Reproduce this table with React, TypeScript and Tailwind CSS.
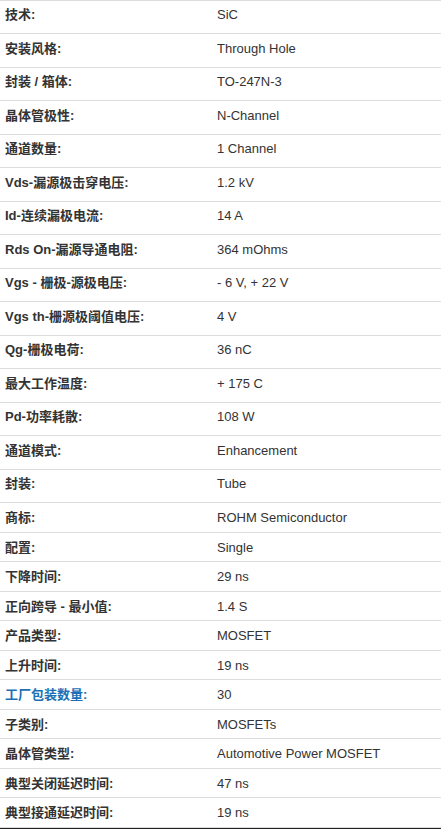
import React from 'react';

interface SpecRow {
  label: string;
  value: string;
  link?: boolean;
}

const ROWS: SpecRow[] = [
  { label: '技术:', value: 'SiC' },
  { label: '安装风格:', value: 'Through Hole' },
  { label: '封装 / 箱体:', value: 'TO-247N-3' },
  { label: '晶体管极性:', value: 'N-Channel' },
  { label: '通道数量:', value: '1 Channel' },
  { label: 'Vds-漏源极击穿电压:', value: '1.2 kV' },
  { label: 'Id-连续漏极电流:', value: '14 A' },
  { label: 'Rds On-漏源导通电阻:', value: '364 mOhms' },
  { label: 'Vgs - 栅极-源极电压:', value: '- 6 V, + 22 V' },
  { label: 'Vgs th-栅源极阈值电压:', value: '4 V' },
  { label: 'Qg-栅极电荷:', value: '36 nC' },
  { label: '最大工作温度:', value: '+ 175 C' },
  { label: 'Pd-功率耗散:', value: '108 W' },
  { label: '通道模式:', value: 'Enhancement' },
  { label: '封装:', value: 'Tube' },
  { label: '商标:', value: 'ROHM Semiconductor' },
  { label: '配置:', value: 'Single' },
  { label: '下降时间:', value: '29 ns' },
  { label: '正向跨导 - 最小值:', value: '1.4 S' },
  { label: '产品类型:', value: 'MOSFET' },
  { label: '上升时间:', value: '19 ns' },
  { label: '工厂包装数量:', value: '30', link: true },
  { label: '子类别:', value: 'MOSFETs' },
  { label: '晶体管类型:', value: 'Automotive Power MOSFET' },
  { label: '典型关闭延迟时间:', value: '47 ns' },
  { label: '典型接通延迟时间:', value: '19 ns' },
];

// first block of rows is taller (text sits a bit high), tail rows are tighter
const rowHeight = (idx: number) => {
  if (idx < 15) return idx % 2 === 0 ? 'h-[33px] pb-[5px]' : 'h-[34px] pb-[5px]';
  if (idx === 15) return 'h-[30px]';
  return idx % 2 === 0 ? 'h-[29px]' : 'h-[30px]';
};

const App: React.FC = () => {
  return (
    <div className="w-[441px] h-[829px] bg-white overflow-hidden font-['Liberation_Sans','Arial','Noto_Sans_CJK_SC',sans-serif] text-[13px] text-[#333]">
      <div className="flex flex-col">
        {ROWS.map((row, idx) => (
          <div
            key={idx}
            className={`grid grid-cols-[216px_1fr] items-center border-t border-[#dddddd] ${rowHeight(idx)}`}
          >
            <span className={`pl-[5px] font-bold leading-none ${row.link ? 'text-[#1a6fb5]' : 'text-[#333]'}`}>
              {row.label}
            </span>
            <span className="pl-px leading-none text-[#333]">{row.value}</span>
          </div>
        ))}
      </div>
      <div className="border-t border-[#dddddd] h-[1px]" />
      <div className="h-[2px] bg-[#222]" />
    </div>
  );
};

export default App;
